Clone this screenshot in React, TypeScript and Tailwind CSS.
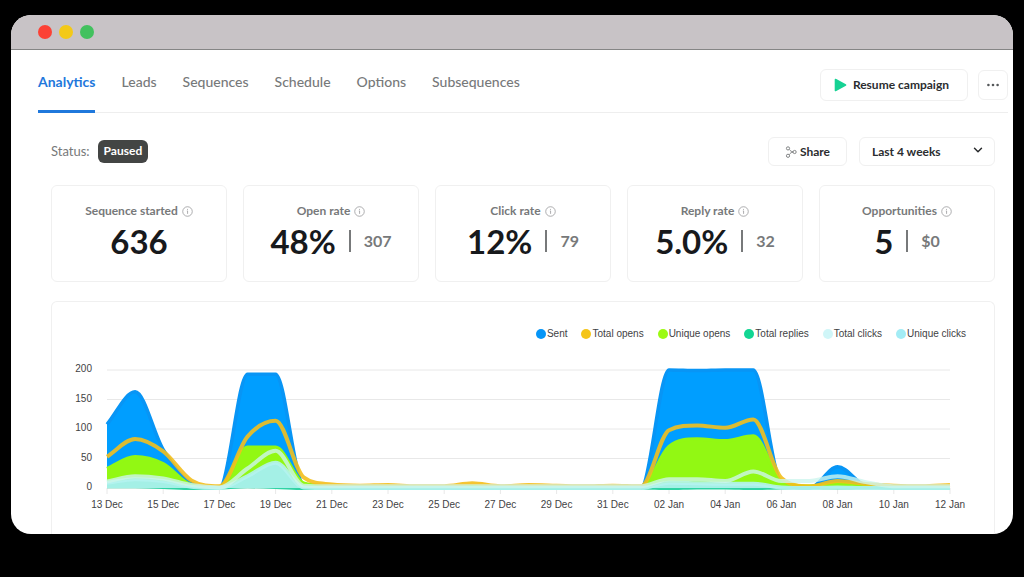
import { ChevronDown } from "lucide-react";

const tabs = ["Analytics", "Leads", "Sequences", "Schedule", "Options", "Subsequences"];

const stats = [
  { label: "Sequence started", value: "636" },
  { label: "Open rate", value: "48%", extra: "307" },
  { label: "Click rate", value: "12%", extra: "79" },
  { label: "Reply rate", value: "5.0%", extra: "32" },
  { label: "Opportunities", value: "5", extra: "$0" },
];

const legend = [
  { label: "Sent", dot: "bg-[#0595f7]" },
  { label: "Total opens", dot: "bg-[#f5c518]" },
  { label: "Unique opens", dot: "bg-[#9cfa12]" },
  { label: "Total replies", dot: "bg-[#12d693]" },
  { label: "Total clicks", dot: "bg-[#d0f6f8]" },
  { label: "Unique clicks", dot: "bg-[#a3ecf5]" },
];

// One value per day, 13 Dec to 12 Jan
const sent = [108, 163, 65, 8, 0, 193, 193, 4, 0, 0, 0, 0, 0, 0, 0, 0, 0, 0, 0, 0, 200, 199, 200, 200, 8, 0, 36, 4, 0, 0, 0];
const totalOpens = [53, 83, 62, 13, 3, 87, 114, 18, 6, 4, 5, 3, 3, 8, 3, 5, 4, 3, 4, 3, 98, 106, 102, 116, 17, 3, 12, 7, 4, 3, 5];
const uniqueOpens = [33, 53, 41, 5, 1, 69, 69, 8, 3, 2, 2, 1, 1, 2, 1, 1, 1, 1, 1, 1, 70, 83, 80, 88, 12, 3, 7, 3, 1, 1, 1];
const replies = [2, 2, 1, -1, 0, 2, 1, -1, -1, 0, 0, 0, 0, 0, 0, 0, 0, 0, 0, 0, -1, 0, 0, -1, 0, 0, 0, 0, 0, 0, 0];
const totalClicks = [11, 20, 16, 5, 1, 33, 63, 4, 3, 3, 3, 3, 3, 3, 3, 3, 3, 3, 3, 3, 15, 15, 12, 28, 12, 12, 20, 10, 3, 3, 3];
const uniqueClicks = [9, 15, 12, 2, 0, 20, 43, 1, 0, 0, 0, 0, 0, 0, 0, 0, 0, 0, 0, 0, 9, 8, 7, 7, 1, 0, 1, 0, 0, 0, 0];

const LEFT = 55;
const RIGHT = 898;
const BASE = 138;
const STEP = (RIGHT - LEFT) / 30;
const UNIT = 0.59;

// Monotone cubic curve through the daily values
function curve(values: number[]): string {
  const ys = values.map((v) => BASE - v * UNIT);
  const slopes = ys.map((y, i) => {
    if (i === 0) return (ys[1] - y) / STEP;
    if (i === ys.length - 1) return (y - ys[i - 1]) / STEP;
    const before = (y - ys[i - 1]) / STEP;
    const after = (ys[i + 1] - y) / STEP;
    if (before * after <= 0) return 0;
    const limit = 3 * Math.min(Math.abs(before), Math.abs(after));
    return Math.sign(before) * Math.min(Math.abs(before + after) / 2, limit);
  });
  let d = `M${LEFT} ${ys[0].toFixed(2)}`;
  for (let i = 1; i < ys.length; i++) {
    const x0 = LEFT + (i - 1) * STEP;
    const x1 = LEFT + i * STEP;
    const h = STEP / 3;
    d += `C${(x0 + h).toFixed(2)} ${(ys[i - 1] + slopes[i - 1] * h).toFixed(2)} ${(x1 - h).toFixed(2)} ${(ys[i] - slopes[i] * h).toFixed(2)} ${x1.toFixed(2)} ${ys[i].toFixed(2)}`;
  }
  return d;
}

const area = (values: number[]) => `${curve(values)}V${BASE}H${LEFT}Z`;

const dates = ["13 Dec", "15 Dec", "17 Dec", "19 Dec", "21 Dec", "23 Dec", "25 Dec", "27 Dec", "29 Dec", "31 Dec", "02 Jan", "04 Jan", "06 Jan", "08 Jan", "10 Jan", "12 Jan"];

function InfoIcon() {
  return (
    <svg viewBox="0 0 12 12" className="size-[11px] shrink-0" fill="none" stroke="#9b9d9f" aria-hidden="true">
      <circle cx="6" cy="6" r="5.2" strokeWidth="0.9" />
      <path d="M5.3 5.4H6.1V8.6M6 3.2V4.2" strokeWidth="0.9" />
    </svg>
  );
}

function ShareIcon() {
  return (
    <svg viewBox="0 0 12 12" className="size-3 shrink-0" fill="none" stroke="#77797b" strokeWidth="0.9" aria-hidden="true">
      <circle cx="3" cy="2.4" r="1.6" />
      <circle cx="3" cy="9.8" r="1.6" />
      <circle cx="9.6" cy="6" r="1.6" />
      <path d="M4.2 3.5C5.2 4.6 6.3 5.6 8 5.9M4.2 8.7C5 7.4 6.3 6.3 8 6.1" />
    </svg>
  );
}

function Chart() {
  return (
    <svg viewBox="0 0 942 166" className="block w-full" role="img" aria-label="Campaign activity per day">
      <g stroke="#e8e8e8" strokeWidth="1">
        {[20, 49.5, 79, 108.5, 138].map((y) => (
          <path key={y} d={`M${LEFT} ${y}H${RIGHT}`} />
        ))}
        {dates.map((d, i) => (
          <path key={d} d={`M${LEFT + i * 2 * STEP} 138V144`} />
        ))}
      </g>
      <path d={area(sent)} fill="#009eff" />
      <path d={curve(sent)} fill="none" stroke="#0895f5" strokeWidth="3.5" />
      <path d={area(uniqueOpens)} fill="#92f813" />
      <path d={curve(uniqueOpens)} fill="none" stroke="#92f813" strokeWidth="3.5" />
      <path d={curve(totalOpens)} fill="none" stroke="#f3bf1d" strokeOpacity="0.9" strokeWidth="4" />
      <path d={curve(replies)} fill="none" stroke="#2fd3a4" strokeWidth="3" />
      <path d={area(uniqueClicks)} fill="#a4f0e6" />
      <path d={curve(uniqueClicks)} fill="none" stroke="#b4f3f0" strokeOpacity="0.9" strokeWidth="4" />
      <path d={curve(totalClicks)} fill="none" stroke="#cdf5ee" strokeOpacity="0.8" strokeWidth="4" />
      <g className="font-['Liberation_Sans',Arial,sans-serif] text-[10px]" fill="#3f4244" textAnchor="end">
        {[200, 150, 100, 50, 0].map((v) => (
          <text key={v} x="40" y={140 - v * UNIT}>
            {v}
          </text>
        ))}
      </g>
      <g className="font-['Liberation_Sans',Arial,sans-serif] text-[10px]" fill="#3f4244" textAnchor="middle">
        {dates.map((d, i) => (
          <text key={d} x={LEFT + i * 2 * STEP} y="158">
            {d}
          </text>
        ))}
      </g>
    </svg>
  );
}

export default function App() {
  return (
    <div className="min-h-screen bg-black pt-[15px] pr-[11px] pb-[43px] pl-[11px] font-['Lato',sans-serif]">
      <div className="overflow-hidden rounded-[20px] bg-white">
        <div className="flex h-[35px] items-center gap-[7px] border-b border-[#858585] bg-[#c8c3c6] pl-[27px]">
          <span className="size-3.5 rounded-full bg-[#fc4135]" />
          <span className="size-3.5 rounded-full bg-[#f3c918]" />
          <span className="size-3.5 rounded-full bg-[#42c15e]" />
        </div>

        <header className="pr-[5px] pl-[27px]">
          <div className="flex h-[63px] items-start justify-between border-b border-[#eeeeee]">
            <nav className="flex h-[63px] gap-[26px]">
              {tabs.map((tab, i) => (
                <a
                  key={tab}
                  href="#"
                  className={
                    i === 0
                      ? "border-b-[3px] border-[#1f78dc] pt-[22px] text-sm leading-5 font-bold text-[#1f78dc]"
                      : "pt-[22px] text-sm leading-5 font-medium text-[#77797a]"
                  }
                >
                  {tab}
                </a>
              ))}
            </nav>
            <div className="flex items-center gap-2.5 pt-[19px]">
              <button className="flex h-8 items-center gap-1.5 rounded-md border border-[#f0f0f0] pr-[18px] pl-[13px] text-xs font-bold text-[#2b2d2f]">
                <svg viewBox="0 0 13 14" className="h-3.5 w-[13px]" aria-hidden="true">
                  <path d="M1.5 1.5L11.5 7L1.5 12.5Z" fill="#17d294" stroke="#17d294" strokeWidth="1.6" strokeLinejoin="round" />
                </svg>
                Resume campaign
              </button>
              <button aria-label="More actions" className="flex size-[30px] items-center justify-center rounded-md border border-[#f0f0f0]">
                <svg viewBox="0 0 14 4" className="h-1 w-3.5" fill="#55585a" aria-hidden="true">
                  <circle cx="2.4" cy="2" r="1.3" />
                  <circle cx="7" cy="2" r="1.3" />
                  <circle cx="11.6" cy="2" r="1.3" />
                </svg>
              </button>
            </div>
          </div>
        </header>

        <main className="pt-6 pr-[18px] pl-10">
          <div className="flex items-center justify-between">
            <div className="flex items-center gap-2 text-[13px] text-[#77797a]">
              <span>Status:</span>
              <span className="rounded-md bg-[#434544] px-1.5 pt-px pb-0.5 text-xs leading-5 font-bold text-white">Paused</span>
            </div>
            <div className="flex gap-3">
              <button className="flex h-[29px] items-center justify-center gap-[3px] rounded-md border border-[#f0f0f0] px-4 text-xs font-bold text-[#2b2d2f]">
                <ShareIcon />
                Share
              </button>
              <div className="relative">
                <select
                  aria-label="Date range"
                  className="h-[29px] w-[136px] appearance-none rounded-md border border-[#f0f0f0] bg-white pl-3 text-xs font-bold text-[#2b2d2f]"
                >
                  <option>Last 4 weeks</option>
                </select>
                <ChevronDown className="pointer-events-none absolute top-1.5 right-2.5 size-3.5 text-[#2b2d2f]" strokeWidth={2.5} />
              </div>
            </div>
          </div>

          <section className="mt-[19px] grid grid-cols-5 gap-4">
            {stats.map((s) => (
              <div key={s.label} className="flex h-[97px] flex-col items-center rounded-md border border-[#f0f0f0] pt-[15px]">
                <div className="flex items-center gap-1 text-xs leading-5 font-bold text-[#77797a]">
                  {s.label}
                  <InfoIcon />
                </div>
                <div className="flex items-center gap-[13px] leading-10">
                  <span className="text-[33px] font-bold text-[#17191c]">{s.value}</span>
                  {s.extra && <span className="h-[22px] w-0.5 bg-[#77797a]" />}
                  {s.extra && <span className="text-base leading-10 font-bold text-[#77797a]">{s.extra}</span>}
                </div>
              </div>
            ))}
          </section>

          <section className="mt-[19px] rounded-t-md border border-b-0 border-[#f0f0f0] pt-6">
            <ul className="flex justify-end gap-3.5 pr-7 font-['Liberation_Sans',Arial,sans-serif] text-[10px] leading-4 text-[#3f4244]">
              {legend.map((l) => (
                <li key={l.label} className="flex items-center gap-px">
                  <span className={`size-2.5 rounded-full ${l.dot}`} />
                  {l.label}
                </li>
              ))}
            </ul>
            <div className="pt-2 pb-[18px]">
              <Chart />
            </div>
          </section>
        </main>
      </div>
    </div>
  );
}
